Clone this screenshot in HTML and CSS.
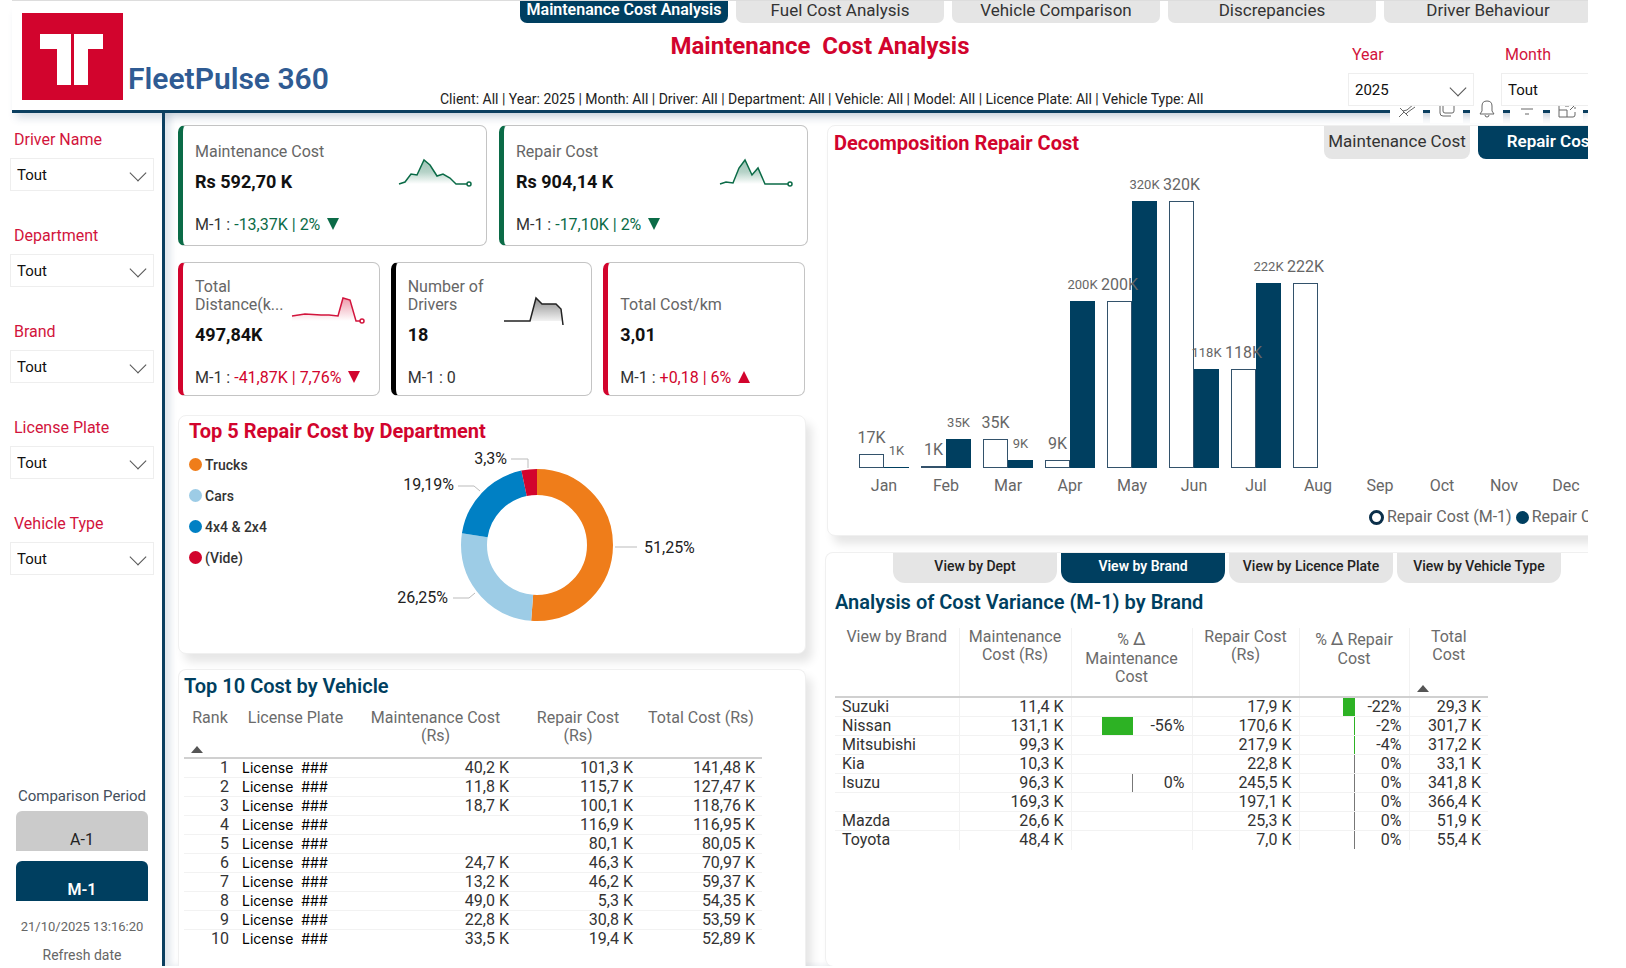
FILE: index.html
```
<!DOCTYPE html>
<html lang="en">
<head>
    <meta charset="UTF-8">
    <title>FleetPulse 360</title>
    <link rel="stylesheet" href="styles.css">
</head>
<body>
<div class="report">
    <header class="header">
        <div class="brand">
            <svg class="logo" width="101" height="87" viewBox="0 0 101 87">
                <rect width="101" height="87" fill="#d2042d"/>
                <path d="M18 21H49V72H35V36H18ZM52 21H81V36H66V72H52Z" fill="#fff"/>
            </svg>
            <span class="brand-name">FleetPulse 360</span>
        </div>
        <div class="header-center">
            <nav class="tabs">
                <a href="#" class="tab active">Maintenance Cost Analysis</a>
                <a href="#" class="tab">Fuel Cost Analysis</a>
                <a href="#" class="tab">Vehicle Comparison</a>
                <a href="#" class="tab">Discrepancies</a>
                <a href="#" class="tab">Driver Behaviour</a>
            </nav>
            <h1>Maintenance&nbsp; Cost Analysis</h1>
            <p class="filters">Client: All | Year: 2025 | Month: All | Driver: All | Department: All | Vehicle: All | Model: All | Licence Plate: All | Vehicle Type: All</p>
        </div>
        <div class="period">
            <div class="slicer">
                <label for="year">Year</label>
                <div class="select"><select id="year"><option>2025</option></select></div>
            </div>
            <div class="slicer">
                <label for="month">Month</label>
                <div class="select"><select id="month"><option>Tout</option></select></div>
            </div>
        </div>
        <div class="toolbar">
            <button type="button" aria-label="Pin"><svg width="20" height="20" viewBox="0 0 20 20"><path d="M2 18L7 13M3 9L11 17M6 12L10 11L17 5M9 15L11 13L18 8"/></svg></button>
            <button type="button" aria-label="Copy"><svg width="20" height="20" viewBox="0 0 20 20"><path d="M6 4H17V12Q17 14 15 14H8Q6 14 6 12ZM3 7V14Q3 17 6 17H14"/></svg></button>
            <button type="button" aria-label="Alert"><svg width="20" height="20" viewBox="0 0 20 20"><path d="M3 15H17L15 12V7Q15 2 10 2Q5 2 5 7V12ZM8 16Q8 18 10 18Q12 18 12 16"/></svg></button>
            <button type="button" aria-label="Filter"><svg width="20" height="20" viewBox="0 0 20 20"><path d="M2 6H18M4 10H16M8 15H12"/></svg></button>
            <button type="button" aria-label="Focus mode"><svg width="20" height="20" viewBox="0 0 20 20"><path d="M2 4V18H10V11H2M10 18H16Q18 18 18 16V13M18 10V8M15 4H18M8 7H12M13 11L17 7"/></svg></button>
        </div>
    </header>

    <div class="body">
        <aside class="sidebar">
            <div class="slicer">
                <label for="driver">Driver Name</label>
                <div class="select"><select id="driver"><option>Tout</option></select></div>
            </div>
            <div class="slicer">
                <label for="department">Department</label>
                <div class="select"><select id="department"><option>Tout</option></select></div>
            </div>
            <div class="slicer">
                <label for="brand">Brand</label>
                <div class="select"><select id="brand"><option>Tout</option></select></div>
            </div>
            <div class="slicer">
                <label for="plate">License Plate</label>
                <div class="select"><select id="plate"><option>Tout</option></select></div>
            </div>
            <div class="slicer">
                <label for="type">Vehicle Type</label>
                <div class="select"><select id="type"><option>Tout</option></select></div>
            </div>
            <div class="comparison">
                <p class="comparison-title">Comparison Period</p>
                <button type="button">A-1</button>
                <button type="button" class="active">M-1</button>
                <p class="refresh">21/10/2025 13:16:20</p>
                <p class="refresh">Refresh date</p>
            </div>
        </aside>

        <main class="main">
            <div class="left">
                <div class="kpis">
                    <div class="kpi green">
                        <div class="kpi-top">
                            <div>
                                <p class="kpi-label">Maintenance Cost</p>
                                <p class="kpi-value">Rs 592,70 K</p>
                            </div>
                            <svg class="spark" width="76" height="30" viewBox="0 0 76 30">
                                <defs>
                                    <linearGradient id="fadeGreen" x1="0" y1="0" x2="0" y2="1">
                                        <stop offset="0" stop-color="#0b6b47" stop-opacity=".4"/>
                                        <stop offset=".5" stop-color="#0b6b47" stop-opacity=".3"/>
                                        <stop offset="1" stop-color="#0b6b47" stop-opacity="0"/>
                                    </linearGradient>
                                </defs>
                                <path class="area" fill="url(#fadeGreen)" d="M1 26L7 24L13 16L19 17L26 2L32 7L39 18L45 16L52 20L58 26Z"/>
                                <path class="line" d="M1 26L7 24L13 16L19 17L26 2L32 7L39 18L45 16L52 20L58 26H69"/>
                                <circle class="line" cx="71" cy="26" r="2"/>
                            </svg>
                        </div>
                        <p class="kpi-prev">M-1 : <span>-13,37K | 2% <i class="down"></i></span></p>
                    </div>
                    <div class="kpi green">
                        <div class="kpi-top">
                            <div>
                                <p class="kpi-label">Repair Cost</p>
                                <p class="kpi-value">Rs 904,14 K</p>
                            </div>
                            <svg class="spark" width="76" height="30" viewBox="0 0 76 30">
                                <path class="area" fill="url(#fadeGreen)" d="M1 26L7 24L14 25L20 10L26 2L33 17L39 10L46 26Z"/>
                                <path class="line" d="M1 26L7 24L14 25L20 10L26 2L33 17L39 10L46 26H69"/>
                                <circle class="line" cx="71" cy="26" r="2"/>
                            </svg>
                        </div>
                        <p class="kpi-prev">M-1 : <span>-17,10K | 2% <i class="down"></i></span></p>
                    </div>
                </div>

                <div class="kpis small">
                    <div class="kpi red">
                        <div class="kpi-top">
                            <div>
                                <p class="kpi-label">Total<br>Distance(k...</p>
                                <p class="kpi-value">497,84K</p>
                            </div>
                            <svg class="spark" width="76" height="30" viewBox="0 0 76 30">
                                <defs>
                                    <linearGradient id="fadeRed" x1="0" y1="0" x2="0" y2="1">
                                        <stop offset="0" stop-color="#d2042d" stop-opacity=".4"/>
                                        <stop offset="1" stop-color="#d2042d" stop-opacity="0"/>
                                    </linearGradient>
                                </defs>
                                <path class="area" fill="url(#fadeRed)" d="M1 20L14 18L47 20L52 2L59 4L65 25L1 25Z"/>
                                <path class="line" d="M1 20L14 18L30 19L38 19L47 20L52 2L59 4L65 25H69"/>
                                <circle class="line" cx="71" cy="25" r="2"/>
                            </svg>
                        </div>
                        <p class="kpi-prev">M-1 : <span>-41,87K | 7,76% <i class="down"></i></span></p>
                    </div>
                    <div class="kpi black">
                        <div class="kpi-top">
                            <div>
                                <p class="kpi-label">Number of<br>Drivers</p>
                                <p class="kpi-value">18</p>
                            </div>
                            <svg class="spark" width="76" height="30" viewBox="0 0 76 30">
                                <defs>
                                    <linearGradient id="fadeBlack" x1="0" y1="0" x2="0" y2="1">
                                        <stop offset="0" stop-color="#000" stop-opacity=".45"/>
                                        <stop offset="1" stop-color="#000" stop-opacity=".05"/>
                                    </linearGradient>
                                </defs>
                                <path class="area" fill="url(#fadeBlack)" d="M27 25L33 2L39 8H53L58 13L60 25Z"/>
                                <path class="line" d="M1 25H27L33 2L39 8H53L58 13L60 29"/>
                            </svg>
                        </div>
                        <p class="kpi-prev">M-1 : 0</p>
                    </div>
                    <div class="kpi red">
                        <div class="kpi-top">
                            <div>
                                <p class="kpi-label">Total Cost/km</p>
                                <p class="kpi-value">3,01</p>
                            </div>
                        </div>
                        <p class="kpi-prev">M-1 : <span>+0,18 | 6% <i class="up"></i></span></p>
                    </div>
                </div>

                <section class="card department">
                    <h2 class="red-title">Top 5 Repair Cost by Department</h2>
                    <div class="donut-row">
                        <ul class="legend">
                            <li><i class="dot orange"></i>Trucks</li>
                            <li><i class="dot light"></i>Cars</li>
                            <li><i class="dot blue"></i>4x4 &amp; 2x4</li>
                            <li><i class="dot crimson"></i>(Vide)</li>
                        </ul>
                        <svg class="donut" width="310" height="180" viewBox="0 0 310 180">
                            <g fill="none" stroke-width="26" transform="rotate(-90 148 96)">
                                <circle cx="148" cy="96" r="63" pathLength="100" stroke="#ef7d1a" stroke-dasharray="51.25 100"/>
                                <circle cx="148" cy="96" r="63" pathLength="100" stroke="#9dcce6" stroke-dasharray="26.25 100" stroke-dashoffset="-51.25"/>
                                <circle cx="148" cy="96" r="63" pathLength="100" stroke="#0080c4" stroke-dasharray="19.2 100" stroke-dashoffset="-77.5"/>
                                <circle cx="148" cy="96" r="63" pathLength="100" stroke="#d2042d" stroke-dasharray="3.3 100" stroke-dashoffset="-96.7"/>
                            </g>
                            <path fill="none" stroke="#bbb" d="M122 10H139V19M69 37H85L91 42M226 98H248M64 149H80L86 144"/>
                            <text x="118" y="15" text-anchor="end">3,3%</text>
                            <text x="65" y="41" text-anchor="end">19,19%</text>
                            <text x="255" y="104">51,25%</text>
                            <text x="59" y="154" text-anchor="end">26,25%</text>
                        </svg>
                    </div>
                </section>

                <section class="card vehicles">
                    <h2 class="blue-title">Top 10 Cost by Vehicle</h2>
                    <table class="vehicle-table">
                        <colgroup><col class="w-rank"><col class="w-plate"><col class="w-maint"><col class="w-repair"><col class="w-total"></colgroup>
                        <thead>
                            <tr><th>Rank<i class="sort"></i></th><th>License Plate</th><th>Maintenance Cost<br>(Rs)</th><th>Repair Cost<br>(Rs)</th><th>Total Cost (Rs)</th></tr>
                        </thead>
                        <tbody>
                            <tr><td>1</td><td>License&nbsp; ###</td><td>40,2 K</td><td>101,3 K</td><td>141,48 K</td></tr>
                            <tr><td>2</td><td>License&nbsp; ###</td><td>11,8 K</td><td>115,7 K</td><td>127,47 K</td></tr>
                            <tr><td>3</td><td>License&nbsp; ###</td><td>18,7 K</td><td>100,1 K</td><td>118,76 K</td></tr>
                            <tr><td>4</td><td>License&nbsp; ###</td><td></td><td>116,9 K</td><td>116,95 K</td></tr>
                            <tr><td>5</td><td>License&nbsp; ###</td><td></td><td>80,1 K</td><td>80,05 K</td></tr>
                            <tr><td>6</td><td>License&nbsp; ###</td><td>24,7 K</td><td>46,3 K</td><td>70,97 K</td></tr>
                            <tr><td>7</td><td>License&nbsp; ###</td><td>13,2 K</td><td>46,2 K</td><td>59,37 K</td></tr>
                            <tr><td>8</td><td>License&nbsp; ###</td><td>49,0 K</td><td>5,3 K</td><td>54,35 K</td></tr>
                            <tr><td>9</td><td>License&nbsp; ###</td><td>22,8 K</td><td>30,8 K</td><td>53,59 K</td></tr>
                            <tr><td>10</td><td>License&nbsp; ###</td><td>33,5 K</td><td>19,4 K</td><td>52,89 K</td></tr>
                        </tbody>
                    </table>
                </section>
            </div>

            <div class="right">
                <section class="card decomposition">
                    <div class="card-head">
                        <h2 class="red-title">Decomposition Repair Cost</h2>
                        <div class="switch">
                            <button type="button">Maintenance Cost</button>
                            <button type="button" class="active">Repair Cost</button>
                        </div>
                    </div>
                    <div class="chart">
                        <div class="month"><div class="bars"><div class="bar prev"><b>17K</b><i style="height:14px"></i></div><div class="bar"><b>1K</b><i style="height:1px"></i></div></div><span>Jan</span></div>
                        <div class="month"><div class="bars"><div class="bar prev"><b>1K</b><i style="height:1px"></i></div><div class="bar"><b>35K</b><i style="height:29px"></i></div></div><span>Feb</span></div>
                        <div class="month"><div class="bars"><div class="bar prev"><b>35K</b><i style="height:29px"></i></div><div class="bar"><b>9K</b><i style="height:8px"></i></div></div><span>Mar</span></div>
                        <div class="month"><div class="bars"><div class="bar prev"><b>9K</b><i style="height:8px"></i></div><div class="bar"><b>200K</b><i style="height:167px"></i></div></div><span>Apr</span></div>
                        <div class="month"><div class="bars"><div class="bar prev"><b>200K</b><i style="height:167px"></i></div><div class="bar"><b>320K</b><i style="height:267px"></i></div></div><span>May</span></div>
                        <div class="month"><div class="bars"><div class="bar prev"><b>320K</b><i style="height:267px"></i></div><div class="bar"><b>118K</b><i style="height:99px"></i></div></div><span>Jun</span></div>
                        <div class="month"><div class="bars"><div class="bar prev"><b>118K</b><i style="height:99px"></i></div><div class="bar"><b>222K</b><i style="height:185px"></i></div></div><span>Jul</span></div>
                        <div class="month"><div class="bars"><div class="bar prev"><b>222K</b><i style="height:185px"></i></div><div class="bar"></div></div><span>Aug</span></div>
                        <div class="month"><div class="bars"></div><span>Sep</span></div>
                        <div class="month"><div class="bars"></div><span>Oct</span></div>
                        <div class="month"><div class="bars"></div><span>Nov</span></div>
                        <div class="month"><div class="bars"></div><span>Dec</span></div>
                    </div>
                    <div class="chart-legend">
                        <span><i class="ring"></i>Repair Cost (M-1)</span>
                        <span><i class="disc"></i>Repair Cost</span>
                    </div>
                </section>

                <section class="card variance">
                    <div class="views">
                        <button type="button">View by Dept</button>
                        <button type="button" class="active">View by Brand</button>
                        <button type="button">View by Licence Plate</button>
                        <button type="button">View by Vehicle Type</button>
                    </div>
                    <h2 class="blue-title">Analysis of Cost Variance (M-1) by Brand</h2>
                    <table class="brand-table">
                        <colgroup><col class="w-brand"><col class="w-bmaint"><col class="w-dmaint"><col class="w-brepair"><col class="w-drepair"><col class="w-btotal"></colgroup>
                        <thead>
                            <tr><th>View by Brand</th><th>Maintenance<br>Cost (Rs)</th><th>% <big>Δ</big><br>Maintenance<br>Cost</th><th>Repair Cost<br>(Rs)</th><th>% <big>Δ</big> Repair<br>Cost</th><th>Total<br>Cost<i class="sort"></i></th></tr>
                        </thead>
                        <tbody>
                            <tr><td>Suzuki</td><td>11,4 K</td><td></td><td>17,9 K</td><td><div class="delta neg"><span><i style="width:11px"></i></span>-22%</div></td><td>29,3 K</td></tr>
                            <tr><td>Nissan</td><td>131,1 K</td><td><div class="delta neg"><span><i style="width:30px"></i></span>-56%</div></td><td>170,6 K</td><td><div class="delta neg"><span></span>-2%</div></td><td>301,7 K</td></tr>
                            <tr><td>Mitsubishi</td><td>99,3 K</td><td></td><td>217,9 K</td><td><div class="delta neg"><span></span>-4%</div></td><td>317,2 K</td></tr>
                            <tr><td>Kia</td><td>10,3 K</td><td></td><td>22,8 K</td><td><div class="delta"><span></span>0%</div></td><td>33,1 K</td></tr>
                            <tr><td>Isuzu</td><td>96,3 K</td><td><div class="delta"><span></span>0%</div></td><td>245,5 K</td><td><div class="delta"><span></span>0%</div></td><td>341,8 K</td></tr>
                            <tr><td></td><td>169,3 K</td><td></td><td>197,1 K</td><td><div class="delta"><span></span>0%</div></td><td>366,4 K</td></tr>
                            <tr><td>Mazda</td><td>26,6 K</td><td></td><td>25,3 K</td><td><div class="delta"><span></span>0%</div></td><td>51,9 K</td></tr>
                            <tr><td>Toyota</td><td>48,4 K</td><td></td><td>7,0 K</td><td><div class="delta"><span></span>0%</div></td><td>55,4 K</td></tr>
                        </tbody>
                    </table>
                </section>
            </div>
        </main>
    </div>
</div>
</body>
</html>
```
FILE: styles.css
```
* {
    box-sizing: border-box;
}

body {
    margin: 0;
    background: #fff;
    font-family: Roboto, "Liberation Sans", sans-serif;
    font-size: 16px;
    line-height: 18px;
    color: #333;
}

h1, h2, p, ul {
    margin: 0;
    padding: 0;
}

button, select {
    font-family: inherit;
    border: none;
    cursor: pointer;
}

.report {
    margin-right: 38px;
    height: calc(100vh - 2px);
    min-height: 966px;
    overflow: hidden;
    display: flex;
    flex-direction: column;
}

/* header */
.header {
    position: relative;
    z-index: 1;
    display: flex;
    height: 113px;
    flex: none;
    margin-left: 12px;
    border-top: 1px solid #ddd;
    border-bottom: 3px solid #0b3f60;
    box-shadow: 0 9px 8px -4px rgba(60, 90, 130, .2);
}

.brand {
    display: flex;
    align-items: flex-end;
    width: 428px;
    flex: none;
    padding: 0 0 10px 10px;
    gap: 5px;
}

.brand-name {
    font-size: 30px;
    line-height: 42px;
    font-weight: 600;
    color: #2f5b93;
    white-space: nowrap;
}

.header-center {
    width: 760px;
    flex: none;
    text-align: center;
}

.tabs {
    display: flex;
    gap: 8px;
    margin-left: 80px;
}

.tab {
    flex: none;
    width: 208px;
    height: 22px;
    border-radius: 0 0 7px 7px;
    background: #e5e5e5;
    color: #333;
    font-size: 17px;
    line-height: 18px;
    text-decoration: none;
    white-space: nowrap;
}

.tab.active,
.switch .active,
.views .active,
.comparison .active {
    background: #003f60;
    color: #fff;
    font-weight: 600;
}

.tab.active {
    font-size: 16px;
}

h1 {
    margin-top: 8px;
    font-size: 24px;
    line-height: 30px;
    color: #d2042d;
}

.filters {
    margin-top: 29px;
    font-size: 14px;
    color: #222;
    white-space: nowrap;
}

.period {
    position: relative;
    z-index: 2;
    display: flex;
    gap: 27px;
    margin: 44px 0 0 148px;
}

.period .slicer {
    width: 126px;
    height: 60px;
    flex: none;
}

.toolbar {
    position: absolute;
    right: 5px;
    top: 94px;
    z-index: 1;
    display: flex;
    gap: 7px;
}

.toolbar button {
    width: 33px;
    height: 28px;
    padding: 0;
    background: #fff;
}

.toolbar svg {
    display: block;
    margin: 0 auto;
    fill: none;
    stroke: #666;
}

/* slicers */
.slicer label {
    display: block;
    padding-left: 4px;
    color: #d2143c;
    line-height: 20px;
}

.select {
    position: relative;
    margin-top: 8px;
}

.select select {
    display: block;
    appearance: none;
    width: 100%;
    height: 33px;
    padding: 0 6px;
    border: 1px solid #eee;
    background: #fff;
    font-size: 15px;
    color: #111;
}

.select::after {
    content: "";
    position: absolute;
    right: 10px;
    top: 9px;
    width: 11px;
    height: 11px;
    border: solid #555;
    border-width: 0 1px 1px 0;
    transform: rotate(45deg);
    pointer-events: none;
}

/* body */
.body {
    display: flex;
    flex: 1;
}

.sidebar {
    display: flex;
    flex-direction: column;
    gap: 35px;
    width: 165px;
    flex: none;
    padding: 17px 8px 2px 10px;
    border-right: 3px solid #0b3f60;
}

.comparison {
    display: flex;
    flex-direction: column;
    gap: 10px;
    margin-top: auto;
    padding: 0 6px;
    text-align: center;
}

.comparison-title {
    margin-bottom: -4px;
    font-size: 15px;
    color: #444f5c;
    white-space: nowrap;
}

.comparison button {
    height: 40px;
    padding: 18px 0 0;
    border-radius: 6px 6px 0 0;
    background: #cbcbcb;
    font-size: 16px;
    line-height: 20px;
    color: #222;
}

.refresh {
    margin-top: 7px;
    margin-bottom: -8px;
    font-size: 13px;
    color: #666;
    white-space: nowrap;
}

.refresh:last-child {
    margin-top: 8px;
    margin-bottom: 0;
    font-size: 14px;
}

.main {
    display: grid;
    grid-template-columns: 630fr 761fr;
    gap: 19px;
    flex: 1;
    min-width: 0;
    padding: 12px 0 0 13px;
    box-shadow: inset 6px 0 6px rgba(60, 90, 130, .14);
}

.left, .right {
    display: flex;
    flex-direction: column;
    min-width: 0;
}

/* kpi cards */
.kpis {
    display: flex;
    gap: 12px;
    margin-bottom: 16px;
}

.kpi {
    display: flex;
    flex: 1;
    flex-direction: column;
    justify-content: flex-end;
    height: 121px;
    padding: 0 12px 11px;
    border: 1px solid #c4c4c4;
    border-left: 5px solid;
    border-radius: 7px;
    background: #fff;
}

.kpis.small {
    gap: 11px;
    margin-bottom: 19px;
    padding-right: 3px;
}

.small .kpi {
    height: 134px;
    padding-bottom: 8px;
}

.kpi.green {
    border-left-color: #0b6b47;
}

.kpi.red {
    border-left-color: #d2042d;
}

.kpi.black {
    border-left-color: #000;
}

.kpi-top {
    display: flex;
    justify-content: space-between;
    align-items: flex-end;
}

.kpi-label {
    color: #666;
    white-space: nowrap;
}

.kpi-value {
    margin: 11px 0 24px;
    font-size: 18px;
    line-height: 20px;
    font-weight: 700;
    color: #111;
    white-space: nowrap;
}

.kpi-prev {
    white-space: nowrap;
}

.green .kpi-prev span {
    color: #0b6b47;
}

.red .kpi-prev span {
    color: #d2042d;
}

.down, .up {
    display: inline-block;
    margin-left: 3px;
    border: solid transparent;
    border-width: 0 6px;
}

.down {
    border-top: 12px solid;
}

.up {
    border-bottom: 12px solid;
}

.spark {
    flex: none;
    margin-bottom: 28px;
}

.small .spark {
    margin: 0 0 43px -20px;
}

.spark .line {
    fill: none;
    stroke-width: 1.5;
}

.green .line {
    stroke: #0b6b47;
}

.red .line {
    stroke: #d2143c;
}

.black .line {
    stroke: #222;
}

/* cards */
.card {
    border: 1px solid #f0f0f0;
    border-radius: 8px;
    background: #fff;
    box-shadow: 6px 8px 10px rgba(0, 0, 0, .1);
}

h2 {
    font-size: 20px;
    line-height: 24px;
    font-weight: 700;
    white-space: nowrap;
}

.red-title {
    color: #d2042d;
}

.blue-title {
    font-weight: 600;
    color: #003f60;
}

.department {
    height: 239px;
    margin: 0 2px 15px 0;
    padding: 3px 10px;
}

.donut-row {
    display: flex;
    gap: 92px;
}

.legend {
    width: 108px;
    margin-top: 6px;
    list-style: none;
    font-size: 14px;
    font-weight: 500;
}

.legend li {
    display: flex;
    align-items: center;
    gap: 3px;
    height: 31px;
}

.dot {
    width: 13px;
    height: 13px;
    border-radius: 50%;
}

.dot.orange {
    background: #ef7d1a;
}

.dot.light {
    background: #9dcce6;
}

.dot.blue {
    background: #0080c4;
}

.dot.crimson {
    background: #d2042d;
}

.donut {
    margin-top: 6px;
    font-size: 16px;
    fill: #222;
}

.vehicles {
    flex: 1;
    margin-right: 2px;
    padding: 4px 5px 0;
    border-bottom: none;
    border-radius: 8px 8px 0 0;
}

/* tables */
table {
    table-layout: fixed;
    border-collapse: collapse;
}

th {
    position: relative;
    padding: 0;
    vertical-align: top;
    font-weight: 400;
    color: #6b6b6b;
    white-space: nowrap;
    border-bottom: 2px solid #d0d0d0;
}

th big {
    font-size: 18px;
    line-height: 22px;
}

td {
    height: 19px;
    padding: 0 7px 0 0;
    line-height: 18px;
    text-align: right;
    color: #333;
    white-space: nowrap;
    border-bottom: 1px solid #f2f2f2;
}

tbody tr:last-child td {
    border-bottom: none;
}

.sort {
    position: absolute;
    left: 7px;
    bottom: 4px;
    border: solid transparent;
    border-width: 0 6px 7px;
    border-bottom-color: #555;
}

.vehicle-table {
    width: 578px;
    margin-top: 11px;
}

.vehicle-table th {
    height: 49px;
}

.w-rank { width: 52px; }
.w-plate { width: 119px; }
.w-maint { width: 161px; }
.w-repair { width: 124px; }
.w-total { width: 122px; }

.vehicle-table td:nth-child(2) {
    padding-left: 6px;
    text-align: left;
    font-family: Inter, sans-serif;
    font-size: 14px;
    color: #000;
}

/* bar chart */
.decomposition {
    height: 411px;
    margin: 0 -10px 16px 0;
}

.card-head {
    display: flex;
    justify-content: space-between;
    padding-left: 6px;
}

.card-head h2 {
    margin-top: 5px;
}

.switch {
    display: flex;
    gap: 8px;
    margin-right: -27px;
}

.switch button {
    width: 146px;
    height: 33px;
    padding: 0 0 3px;
    border-radius: 0 0 8px 8px;
    background: #e5e5e5;
    font-size: 17px;
    color: #333;
    white-space: nowrap;
}

.chart {
    display: grid;
    grid-template-columns: repeat(12, 1fr);
    margin: 10px 0 0 25px;
}

.month {
    text-align: center;
    color: #666;
}

.month > span {
    display: block;
    margin-top: 9px;
}

.bars {
    display: flex;
    justify-content: center;
    align-items: flex-end;
    height: 299px;
}

.bar {
    display: flex;
    flex-direction: column;
    align-items: center;
    width: 25px;
}

.bar b {
    z-index: 1;
    margin-bottom: 7px;
    font-size: 13px;
    font-weight: 400;
}

.bar.prev b {
    font-size: 16px;
}

.bar i {
    width: 100%;
    background: #003f60;
}

.bar.prev i {
    border: 1px solid #33526b;
    background: #fff;
}

.chart-legend {
    display: flex;
    justify-content: flex-end;
    gap: 4px;
    margin: 13px -17px 0 0;
    color: #666;
    white-space: nowrap;
}

.chart-legend span {
    display: flex;
    align-items: center;
    gap: 3px;
}

.ring, .disc {
    width: 15px;
    height: 15px;
    border: 3px solid #0b2f4a;
    border-radius: 50%;
}

.disc {
    width: 13px;
    height: 13px;
    background: #003f60;
    border-color: #003f60;
}

/* variance */
.variance {
    flex: 1;
    margin: 0 -10px 0 -2px;
    padding-left: 9px;
    border-bottom: none;
}

.views {
    display: flex;
    gap: 4px;
    margin-left: 58px;
}

.views button {
    width: 164px;
    height: 30px;
    padding: 0 0 4px;
    border-radius: 0 0 12px 12px;
    background: #e5e5e5;
    font-size: 14px;
    font-weight: 500;
    color: #222;
    white-space: nowrap;
}

.variance h2 {
    margin-top: 7px;
}

.brand-table {
    width: 653px;
    margin-top: 14px;
}

.brand-table th {
    height: 69px;
}

.brand-table th + th,
.brand-table td + td {
    border-left: 1px solid #f2f2f2;
}

.w-brand { width: 124px; }
.w-bmaint { width: 112px; }
.w-dmaint { width: 121px; }
.w-brepair { width: 107px; }
.w-drepair { width: 110px; }
.w-btotal { width: 79px; }

.brand-table td:first-child {
    padding-left: 7px;
    text-align: left;
}

.delta {
    display: flex;
    justify-content: space-between;
    height: 18px;
}

.delta span {
    display: flex;
    justify-content: flex-end;
    width: 54%;
    border-right: 1px solid #777;
}

.delta.neg span {
    border-color: #2db224;
}

.delta i {
    background: #2db224;
}
```
